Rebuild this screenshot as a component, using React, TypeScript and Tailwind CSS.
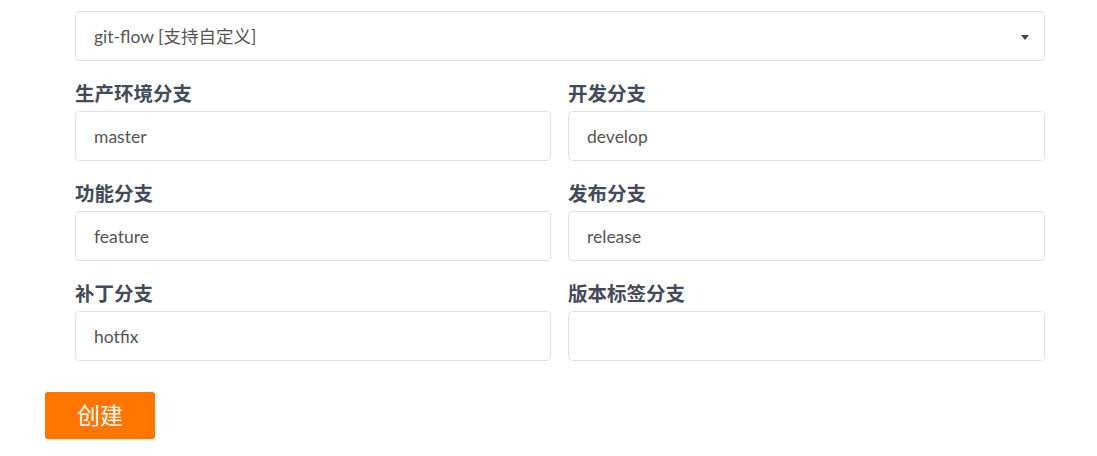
import React from "react";

const font = { fontFamily: 'Lato, "Noto Sans CJK SC", sans-serif' };

function Field({ label, value }: { label: string; value: string }) {
  return (
    <div className="flex flex-col">
      <div className="mt-[21px] mb-[5px] h-[24px] leading-[24px] text-[19.5px] font-bold text-[#434a5a]">{label}</div>
      <div className="h-[50px] rounded-[4px] border border-[#dfe1ea] bg-white pl-[18px] pt-[2px] flex items-center text-[17.5px] text-[#555]">
        {value}
      </div>
    </div>
  );
}

export default function App() {
  return (
    <div className="w-[1097px] h-[456px] bg-white" style={font}>
      <div className="pt-[11px] pl-[75px] w-[1045px]">
        <div className="h-[50px] rounded-[4px] border border-[#dfe1ea] bg-white pl-[18px] pr-[15px] pt-[2px] flex items-center justify-between text-[17.5px] text-[#555]">
          <span>git-flow [支持自定义]</span>
          <span className="w-0 h-0 border-l-[4px] border-r-[4px] border-t-[5px] border-l-transparent border-r-transparent border-t-[#444]" />
        </div>
        <div className="grid grid-cols-[476px_477px] gap-x-[17px]">
          <Field label="生产环境分支" value="master" />
          <Field label="开发分支" value="develop" />
          <Field label="功能分支" value="feature" />
          <Field label="发布分支" value="release" />
          <Field label="补丁分支" value="hotfix" />
          <Field label="版本标签分支" value="" />
        </div>
      </div>
      <div className="pl-[45px] pt-[31px]">
        <button className="w-[110px] h-[47px] rounded-[3px] bg-[#ff7500] text-white text-[23px]">创建</button>
      </div>
    </div>
  );
}
